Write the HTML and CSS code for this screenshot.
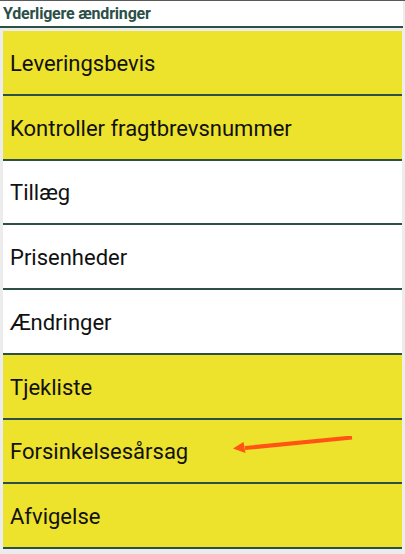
FILE: index.html
```html
<!DOCTYPE html>
<html lang="da">
<head>
<meta charset="utf-8">
<title>Yderligere ændringer</title>
<link rel="stylesheet" href="styles.css">
</head>
<body>
<div class="screen">
  <div class="title-bar">
    <h1 class="title">Yderligere ændringer</h1>
  </div>
  <ul class="menu">
    <li class="item item--yellow">Leveringsbevis</li>
    <li class="item item--yellow">Kontroller fragtbrevsnummer</li>
    <li class="item">Tillæg</li>
    <li class="item">Prisenheder</li>
    <li class="item">Ændringer</li>
    <li class="item item--yellow">Tjekliste</li>
    <li class="item item--yellow item--marked">Forsinkelsesårsag
      <svg class="arrow" width="130" height="24" viewBox="0 0 130 24" aria-hidden="true">
        <line x1="12" y1="12" x2="119" y2="1.5" stroke="#ff5414" stroke-width="4"/>
        <polygon points="0,12.5 10.5,6 12.5,17" fill="#ff5414"/>
      </svg>
    </li>
    <li class="item item--yellow">Afvigelse</li>
  </ul>
</div>
</body>
</html>
```
FILE: styles.css
```css
html, body {
  margin: 0;
  padding: 0;
}
body {
  background: #ececec;
  font-family: Roboto, "Noto Sans", "Liberation Sans", sans-serif;
  width: 405px;
  height: 554px;
  overflow: hidden;
}
.screen {
  border-top: 1px solid #5a5a5a;
}
.title-bar {
  background: #ffffff;
  height: 25px;
  border-bottom: 2px solid #2c4f48;
  padding: 0 3px;
  display: flex;
  align-items: center;
  margin-right: 2px;
}
.title {
  margin: 0;
  font-size: 16px;
  font-weight: 700;
  color: #2c4f48;
  letter-spacing: -0.2px;
}
.menu {
  list-style: none;
  margin: 0;
  padding: 3px 3px 0 3px;
}
.item {
  height: 62.75px;
  border-bottom: 2px solid #2c4f48;
  background: #ffffff;
  display: flex;
  align-items: center;
  padding-left: 7px;
  padding-top: 2px;
  box-sizing: border-box;
  height: 64.75px;
  font-size: 22px;
  color: #111111;
}
.item--yellow {
  background: #ede22c;
}
.item--marked {
  position: relative;
}
.arrow {
  position: absolute;
  left: 230px;
  top: 16px;
}
```
